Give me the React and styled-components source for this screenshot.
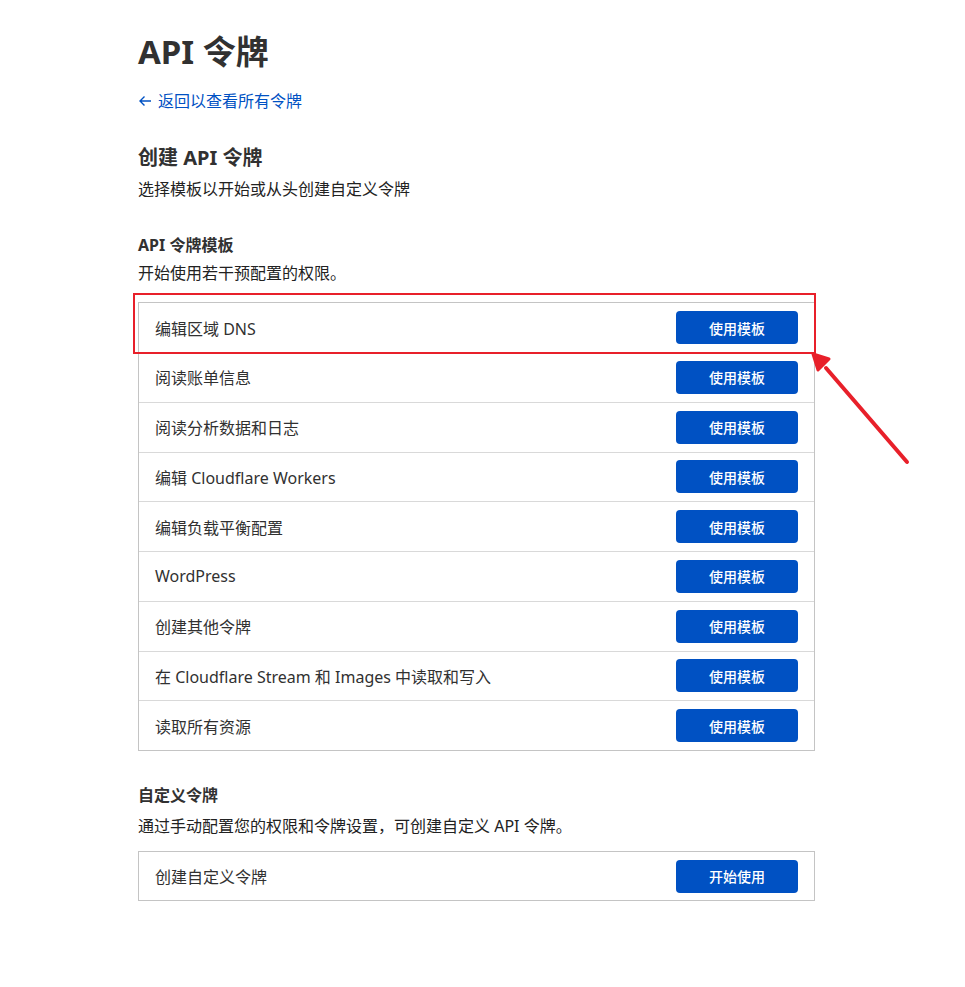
import React from "react";
import styled, { createGlobalStyle } from "styled-components";

const Global = createGlobalStyle`
  html, body { margin: 0; padding: 0; background: #fff; }
  body { font-family: "Noto Sans", "Noto Sans CJK SC", sans-serif; color: #313131; }
  * { box-sizing: border-box; }
`;

const Page = styled.div`
  position: relative;
  width: 965px;
  min-height: 987px;
  padding: 32px 0 0 138px;
`;

const Content = styled.div`
  width: 677px;
  display: flex;
  flex-direction: column;
`;

const Title = styled.h1`
  margin: 0;
  font-size: 33px;
  line-height: 40px;
  font-weight: 700;
  color: #313131;
  font-family: "Noto Sans", "Noto Sans CJK SC", sans-serif;
`;

const BackLink = styled.a`
  margin-top: 18px;
  font-size: 16px;
  line-height: 22px;
  color: #0051c3;
  text-decoration: none;
  display: flex;
  align-items: center;
  gap: 6px;
`;

const Heading = styled.h2`
  margin: ${(p) => p.$mt}px 0 0;
  font-size: ${(p) => p.$size}px;
  line-height: ${(p) => p.$lh}px;
  font-weight: 700;
  color: #313131;
`;

const Desc = styled.p`
  margin: ${(p) => p.$mt}px 0 0;
  font-size: 16px;
  line-height: 22px;
  color: #222;
`;

const Table = styled.div`
  margin-top: ${(p) => p.$mt}px;
  border: 1px solid #c4c4c4;
  display: flex;
  flex-direction: column;
`;

const Row = styled.div`
  position: relative;
  height: ${(p) => p.$h}px;
  display: flex;
  align-items: center;
  justify-content: space-between;
  padding: 0 16px 0 16px;
  font-size: 16px;
  color: #313131;
  & + & { border-top: 1px solid #d9d9d9; }
`;

const Button = styled.button`
  width: 122px;
  height: 33px;
  border: none;
  border-radius: 4px;
  background: #0051c3;
  color: #fff;
  font-family: "Noto Sans", "Noto Sans CJK SC", sans-serif;
  font-size: 14px;
  font-weight: 500;
  cursor: pointer;
`;

const Highlight = styled.div`
  position: absolute;
  z-index: 2;
  left: -6px;
  top: -10px;
  width: 683px;
  height: 61px;
  border: 2px solid #e8202a;
  pointer-events: none;
`;

const Arrow = styled.svg`
  position: absolute;
  z-index: 3;
  left: 0;
  top: 0;
  pointer-events: none;
`;

const templates = [
  "编辑区域 DNS",
  "阅读账单信息",
  "阅读分析数据和日志",
  "编辑 Cloudflare Workers",
  "编辑负载平衡配置",
  "WordPress",
  "创建其他令牌",
  "在 Cloudflare Stream 和 Images 中读取和写入",
  "读取所有资源",
];

export default function App() {
  return (
    <Page>
      <Global />
      <Content>
        <Title>API 令牌</Title>
        <BackLink href="#">
          <svg width="14" height="12" viewBox="0 0 14 12" fill="none" stroke="#0051c3" strokeWidth="1.4">
            <path d="M13 6H2M6.5 1.5L2 6l4.5 4.5" />
          </svg>
          返回以查看所有令牌
        </BackLink>
        <Heading $mt={32} $size={20} $lh={28}>创建 API 令牌</Heading>
        <Desc $mt={6}>选择模板以开始或从头创建自定义令牌</Desc>
        <Heading $mt={34} $size={16} $lh={22}>API 令牌模板</Heading>
        <Desc $mt={6}>开始使用若干预配置的权限。</Desc>
        <Table $mt={18}>
          {templates.map((t, i) => (
            <Row key={t} $h={i === 0 ? 49 : 49.75}>
              <span>{t}</span>
              <Button>使用模板</Button>
              {i === 0 && <Highlight />}
            </Row>
          ))}
        </Table>
        <Heading $mt={33} $size={16} $lh={22}>自定义令牌</Heading>
        <Desc $mt={9}>通过手动配置您的权限和令牌设置，可创建自定义 API 令牌。</Desc>
        <Table $mt={14}>
          <Row $h={48}>
            <span>创建自定义令牌</span>
            <Button>开始使用</Button>
          </Row>
        </Table>
      </Content>
      <Arrow width="965" height="987" viewBox="0 0 965 987">
        <line x1="907" y1="462" x2="826" y2="368" stroke="#e8202a" strokeWidth="4" strokeLinecap="round" />
        <polygon points="813,354 829,359 818,370" fill="#e8202a" stroke="#e8202a" strokeWidth="3" strokeLinejoin="round" />
      </Arrow>
    </Page>
  );
}
